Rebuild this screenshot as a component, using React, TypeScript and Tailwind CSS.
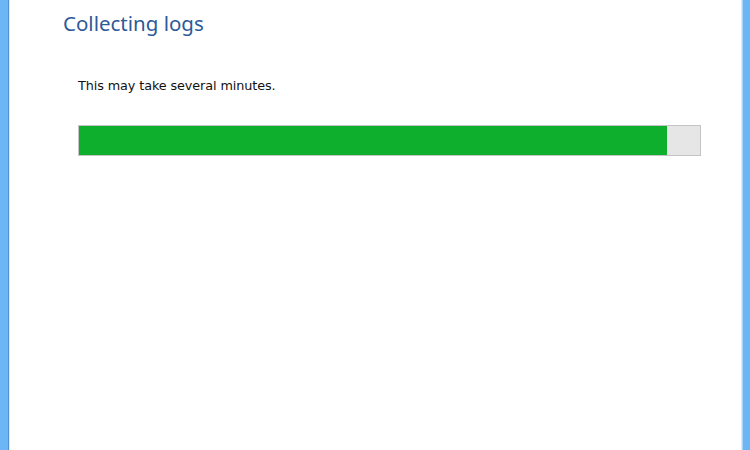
const App = () => {
  const progress = 94.7;

  return (
    <div
      className="flex h-[450px] w-[750px] overflow-hidden bg-white"
      style={{ fontFamily: '"Segoe UI", "Noto Sans", "Liberation Sans", sans-serif' }}
    >
      {/* Left window frame */}
      <div className="flex w-[10px] shrink-0">
        <div className="w-[8px] bg-[#6cb6f6]" />
        <div className="w-[1px] bg-[#4f93d6]" />
        <div className="w-[1px] bg-[#d8ecfb]" />
      </div>

      {/* Content */}
      <div className="flex flex-1 flex-col">
        <h1 className="ml-[53px] mt-[9px] text-[20.5px] font-normal leading-[28px] text-[#2d5a98]">
          Collecting logs
        </h1>

        <div className="ml-[68px] mr-[40px] mt-[41px] flex flex-col">
          <p
            className="text-[12.8px] leading-[16px] tracking-[-0.1px] text-[#111]"
            style={{ fontFamily: '"DejaVu Sans", "Noto Sans", sans-serif' }}
          >
            This may take several minutes.
          </p>

          <div className="mt-[31px] flex h-[31px] w-[623px] border border-[#c4c4c4] bg-[#e6e6e6]">
            <div className="h-full bg-[#0daf2c]" style={{ width: `${progress}%` }} />
          </div>
        </div>
      </div>

      {/* Right window frame */}
      <div className="flex w-[9px] shrink-0">
        <div className="w-[1px] bg-[#d8ecfb]" />
        <div className="w-[1px] bg-[#a9d5fa]" />
        <div className="flex-1 bg-[#6cb6f6]" />
      </div>
    </div>
  );
};

export default App;
